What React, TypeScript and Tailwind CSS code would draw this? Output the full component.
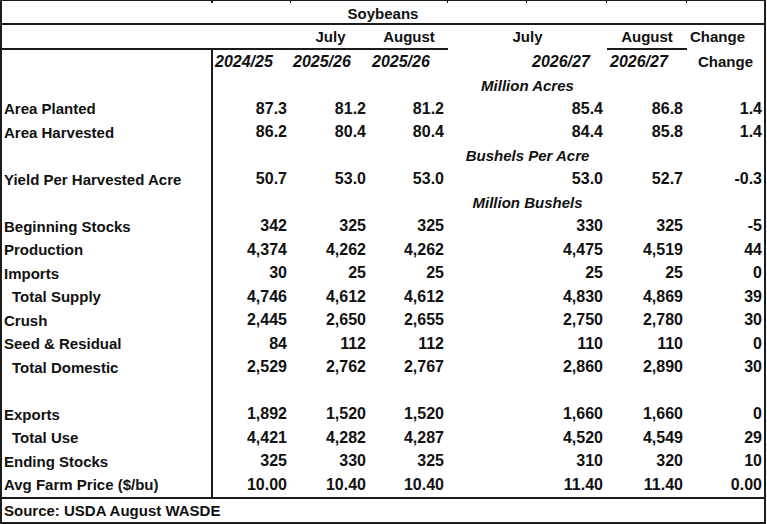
import React from "react";

const cols = "grid grid-cols-[211px_78px_79px_78px_79px_80px_80px_77px]";
const B = "border-[#1c1c1c]";

type DataRow =
  | { kind: "data"; label: string; indent?: boolean; v: string[] }
  | { kind: "section"; label: string }
  | { kind: "blank" };

const rows: DataRow[] = [
  { kind: "section", label: "Million Acres" },
  { kind: "data", label: "Area Planted", v: ["87.3", "81.2", "81.2", "85.4", "86.8", "1.4"] },
  { kind: "data", label: "Area Harvested", v: ["86.2", "80.4", "80.4", "84.4", "85.8", "1.4"] },
  { kind: "section", label: "Bushels Per Acre" },
  { kind: "data", label: "Yield Per Harvested Acre", v: ["50.7", "53.0", "53.0", "53.0", "52.7", "-0.3"] },
  { kind: "section", label: "Million Bushels" },
  { kind: "data", label: "Beginning Stocks", v: ["342", "325", "325", "330", "325", "-5"] },
  { kind: "data", label: "Production", v: ["4,374", "4,262", "4,262", "4,475", "4,519", "44"] },
  { kind: "data", label: "Imports", v: ["30", "25", "25", "25", "25", "0"] },
  { kind: "data", label: "Total Supply", indent: true, v: ["4,746", "4,612", "4,612", "4,830", "4,869", "39"] },
  { kind: "data", label: "Crush", v: ["2,445", "2,650", "2,655", "2,750", "2,780", "30"] },
  { kind: "data", label: "Seed & Residual", v: ["84", "112", "112", "110", "110", "0"] },
  { kind: "data", label: "Total Domestic", indent: true, v: ["2,529", "2,762", "2,767", "2,860", "2,890", "30"] },
  { kind: "blank" },
  { kind: "data", label: "Exports", v: ["1,892", "1,520", "1,520", "1,660", "1,660", "0"] },
  { kind: "data", label: "Total Use", indent: true, v: ["4,421", "4,282", "4,287", "4,520", "4,549", "29"] },
  { kind: "data", label: "Ending Stocks", v: ["325", "330", "325", "310", "320", "10"] },
  { kind: "data", label: "Avg Farm Price ($/bu)", v: ["10.00", "10.40", "10.40", "11.40", "11.40", "0.00"] },
];

function Num({ children, last }: { children?: React.ReactNode; last?: boolean }) {
  return (
    <div className={`flex items-center justify-end text-[16px] ${last ? "pr-[2px]" : "pr-[4px]"}`}>
      {children}
    </div>
  );
}

function LabelCell({ children, indent }: { children?: React.ReactNode; indent?: boolean }) {
  return (
    <div className={`flex items-center border-r-2 ${B} text-[15px] whitespace-nowrap ${indent ? "pl-[10px]" : "pl-[2px]"}`}>
      {children}
    </div>
  );
}

export default function App() {
  return (
    <div className="bg-white w-[767px] h-[524px]">
      <div
        className={`w-[766px] border-l-2 border-r-2 border-b-2 ${B} font-['Liberation_Sans',Arial,sans-serif] font-bold text-[#111] leading-none`}
      >
        {/* top strip with ticks */}
        <div className={`${cols} h-[3px] border-t ${B}`}>
          <div className={`border-r-2 ${B}`} />
          <div className={`border-r ${B}`} />
          <div />
          <div className={`border-r ${B}`} />
          <div className={`border-r ${B}`} />
          <div className={`border-r ${B}`} />
          <div className={`border-r ${B}`} />
          <div />
        </div>
        {/* Soybeans */}
        <div className={`h-[22px] border-b-2 ${B} flex items-center justify-center text-[15px]`}>
          Soybeans
        </div>
        {/* July / August */}
        <div className={`${cols} h-[25px]`}>
          <div className={`border-b-2 ${B}`} />
          <div className={`border-b-2 ${B}`} />
          <div className={`border-b-2 ${B} flex items-center justify-center text-[15px]`}>July</div>
          <div className={`border-b-2 ${B} flex items-center justify-center text-[15px]`}>August</div>
          <div className="col-span-2 border-b-2 border-transparent flex items-center justify-center text-[15px]">
            July
          </div>
          <div className={`border-b-2 ${B} flex items-center justify-center text-[15px]`}>August</div>
          <div className="border-b-2 border-transparent flex items-center pl-[3px] text-[15px]">Change</div>
        </div>
        {/* years row */}
        <div className={`${cols} h-[23.5px]`}>
          <LabelCell />
          <div className="flex items-center pl-[2px] italic text-[16px]">2024/25</div>
          <div className="flex items-center pl-[2px] italic text-[16px]">2025/26</div>
          <div className="flex items-center pl-[2px] italic text-[16px]">2025/26</div>
          <div />
          <div className="flex items-center pl-[5px] italic text-[16px]">2026/27</div>
          <div className="flex items-center pl-[3px] italic text-[16px]">2026/27</div>
          <div className="flex items-center justify-center text-[15px]">Change</div>
        </div>
        {rows.map((r, i) => {
          if (r.kind === "section") {
            return (
              <div key={i} className={`${cols} h-[23.5px]`}>
                <LabelCell />
                <div />
                <div />
                <div />
                <div className="col-span-2 flex items-center justify-center italic text-[15px] whitespace-nowrap">
                  {r.label}
                </div>
                <div />
                <div />
              </div>
            );
          }
          if (r.kind === "blank") {
            return (
              <div key={i} className={`${cols} h-[23.5px]`}>
                <LabelCell />
              </div>
            );
          }
          return (
            <div key={i} className={`${cols} h-[23.5px]`}>
              <LabelCell indent={r.indent}>{r.label}</LabelCell>
              <Num>{r.v[0]}</Num>
              <Num>{r.v[1]}</Num>
              <Num>{r.v[2]}</Num>
              <div />
              <Num>{r.v[3]}</Num>
              <Num>{r.v[4]}</Num>
              <Num last>{r.v[5]}</Num>
            </div>
          );
        })}
        {/* source */}
        <div className={`h-[25px] border-t-2 ${B} flex items-center pl-[2px] text-[15px]`}>
          Source: USDA August WASDE
        </div>
      </div>
    </div>
  );
}
